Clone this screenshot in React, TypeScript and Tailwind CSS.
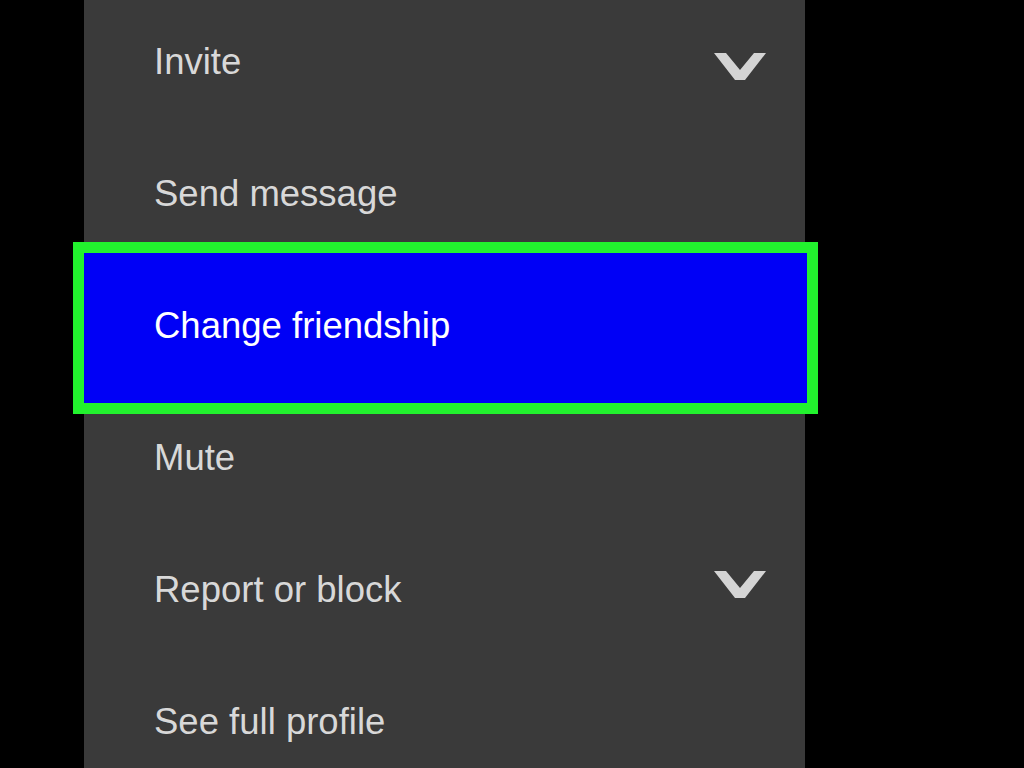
import React from "react";

const items = [
  { label: "Invite", chevron: true, chevronShift: "translate-y-[4px]" },
  { label: "Send message" },
  { label: "Change friendship", selected: true },
  { label: "Mute" },
  { label: "Report or block", chevron: true, chevronShift: "-translate-y-[6px]" },
  { label: "See full profile" },
];

function Chevron({ className }: { className?: string }) {
  return (
    <svg width="52" height="27" viewBox="0 0 52 27" className={className}>
      <polygon points="0,0 12,0 26,17 40,0 52,0 31,27 21,27" fill="#d4d4d4" />
    </svg>
  );
}

export default function App() {
  return (
    <div
      className="w-[1024px] h-[768px] bg-black overflow-hidden"
      style={{ fontFamily: '"Liberation Sans", Arial, sans-serif' }}
    >
      <div className="ml-[84px] w-[721px] h-full bg-[#3a3a3a] flex flex-col">
        <ul className="-mt-[4px]">
          {items.map((item) => (
            <li
              key={item.label}
              className="relative h-[132px] flex items-center justify-between pl-[70px] pr-[39px]"
            >
              {item.selected && (
                <div className="absolute -top-[18px] -left-[11px] -right-[13px] h-[172px] border-[11px] border-[#22f22e] bg-[#0000f6]" />
              )}
              <span
                className={`relative text-[36.5px] leading-none ${
                  item.selected ? "text-white" : "text-[#d8d8d8]"
                }`}
              >
                {item.label}
              </span>
              {item.chevron && <Chevron className={item.chevronShift} />}
            </li>
          ))}
        </ul>
      </div>
    </div>
  );
}
